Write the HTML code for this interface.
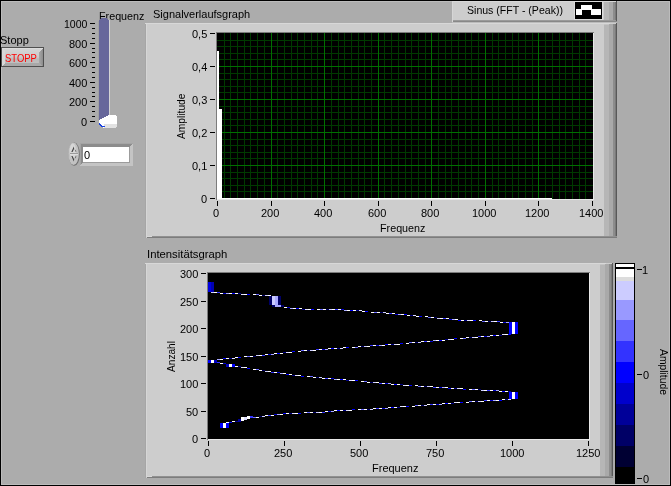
<!DOCTYPE html>
<html><head><meta charset="utf-8"><style>
html,body{margin:0;padding:0;background:#acacac;overflow:hidden;}
svg{display:block;will-change:transform;font-family:"Liberation Sans",sans-serif;font-size:11px;}
</style></head><body>
<svg width="671" height="486" viewBox="0 0 671 486" shape-rendering="crispEdges"><g>
<rect x="0" y="0" width="671" height="486" fill="#acacac"/>
<rect x="0" y="0" width="671" height="1" fill="#000"/>
<rect x="0" y="0" width="1" height="486" fill="#000"/>
<rect x="670" y="0" width="1" height="486" fill="#000"/>
<rect x="0" y="485" width="671" height="1" fill="#000"/>
<rect x="1" y="1" width="669" height="1" fill="#bcbcbc"/>
<rect x="1" y="1" width="1" height="484" fill="#bcbcbc"/>
<rect x="669" y="1" width="1" height="484" fill="#bcbcbc"/>
<rect x="1" y="484" width="669" height="1" fill="#bcbcbc"/>
<text x="0" y="44">Stopp</text>
<rect x="1" y="47" width="43" height="20" fill="#505050"/>
<rect x="2" y="48" width="41" height="18" fill="#c8c8c8"/>
<defs><linearGradient id="btnface" x1="0" y1="0" x2="0" y2="1"><stop offset="0" stop-color="#d6d6d6"/><stop offset="0.5" stop-color="#cbcbcb"/><stop offset="0.62" stop-color="#b9b9b9"/><stop offset="1" stop-color="#c4c4c4"/></linearGradient><linearGradient id="btnr" x1="0" y1="0" x2="1" y2="0"><stop offset="0" stop-color="#a8a8a8"/><stop offset="1" stop-color="#8c8c8c"/></linearGradient></defs>
<path d="M2 48 H43 V66 H2 Z" fill="url(#btnface)"/>
<path d="M43 48 L39 52 L39 63 L43 66 Z" fill="url(#btnr)"/>
<path d="M2 66 L5 63 L39 63 L43 66 Z" fill="#a8a8a8"/>
<path d="M2 48 L5 51 L5 63 L2 66 Z" fill="#d8d8d8"/>
<rect x="2" y="48" width="41" height="1" fill="#dcdcdc"/>
<text x="5" y="62" textLength="31.94" lengthAdjust="spacingAndGlyphs" fill="#ff0000">STOPP</text>
<text x="99" y="20" textLength="45.45" lengthAdjust="spacingAndGlyphs">Frequenz</text>
<text x="64" y="28" textLength="23.42" lengthAdjust="spacingAndGlyphs">1000</text>
<rect x="90" y="23" width="5" height="1" fill="#000"/>
<text x="69" y="48">800</text>
<rect x="90" y="43" width="5" height="1" fill="#000"/>
<text x="69" y="67">600</text>
<rect x="90" y="62" width="5" height="1" fill="#000"/>
<text x="69" y="87">400</text>
<rect x="90" y="82" width="5" height="1" fill="#000"/>
<text x="69" y="106">200</text>
<rect x="90" y="101" width="5" height="1" fill="#000"/>
<text x="81" y="126">0</text>
<rect x="90" y="121" width="5" height="1" fill="#000"/>
<rect x="92" y="28" width="3" height="1" fill="#000"/>
<rect x="92" y="33" width="3" height="1" fill="#000"/>
<rect x="92" y="38" width="3" height="1" fill="#000"/>
<rect x="92" y="48" width="3" height="1" fill="#000"/>
<rect x="92" y="52" width="3" height="1" fill="#000"/>
<rect x="92" y="57" width="3" height="1" fill="#000"/>
<rect x="92" y="67" width="3" height="1" fill="#000"/>
<rect x="92" y="72" width="3" height="1" fill="#000"/>
<rect x="92" y="77" width="3" height="1" fill="#000"/>
<rect x="92" y="87" width="3" height="1" fill="#000"/>
<rect x="92" y="92" width="3" height="1" fill="#000"/>
<rect x="92" y="96" width="3" height="1" fill="#000"/>
<rect x="92" y="106" width="3" height="1" fill="#000"/>
<rect x="92" y="111" width="3" height="1" fill="#000"/>
<rect x="92" y="116" width="3" height="1" fill="#000"/>
<path d="M99 20 L100 19 L101 18 L106 18 L107 19 L108 20 L109 21 L109 125 L99 125 Z" fill="#67679b"/>
<rect x="109" y="20" width="1" height="95" fill="#d4d4d4"/>
<rect x="98" y="21" width="1" height="100" fill="#a2a2a2"/>
<path d="M99 120 L101 119 L103 118 L105 117 L107 116 L109 115 L115 115 L116 116 L117 117 L117 126 L116 127 L115 128 L104 128 L102 127 L100 126 L99 124 Z" fill="#ffffff"/>
<path d="M104 124 L117 124 L117 126 L116 127 L115 128 L104 128 Z" fill="#e2e2e2"/>
<path d="M99 123 h1 v1 h1 v1 h1 v1 h3 v1 h-4 v-1 h-1 v-1 h-1 v-1 h-0 Z" fill="#1840e0"/>
<g shape-rendering="geometricPrecision">
<ellipse cx="74.2" cy="154.2" rx="5.6" ry="11.6" fill="#6e6e6e"/>
<ellipse cx="73.6" cy="153.8" rx="5.3" ry="11.3" fill="#c2c2c2"/>
<ellipse cx="72.8" cy="151" rx="3.2" ry="7.5" fill="#d6d6d6"/>
<path d="M73.8 146.5 L71.3 152 L72.6 152 L74.2 148.5 Z M74.6 149 L75.8 152 L76.4 151.2 Z" fill="#444"/>
<path d="M73.8 161.5 L71.3 156 L72.6 156 L74.2 159.5 Z M74.6 159 L75.8 156 L76.4 156.8 Z" fill="#444"/>
</g>
<rect x="70" y="153" width="8" height="1" fill="#9a9a9a"/>
<rect x="70" y="154" width="8" height="1" fill="#dedede"/>
<rect x="80" y="143" width="53" height="23" fill="#c8c8c8"/>
<path d="M80 143 H133 L129 147 H83 V162 L80 166 Z" fill="#8c8c8c"/>
<path d="M80 143 H133 L132 144 H81 V165 L80 166 Z" fill="#a4a4a4"/>
<path d="M133 143 V166 H80 L83 162 H129 V147 Z" fill="#c4c4c4"/>
<path d="M129 147 V162 H83 L82 163 H130 V146 Z" fill="#9c9c9c"/>
<rect x="83" y="147" width="46" height="15" fill="#ffffff"/>
<text x="84" y="159">0</text>
<text x="153" y="18">Signalverlaufsgraph</text>
<rect x="145" y="23" width="472" height="215" fill="#cdcdcd"/>
<rect x="145" y="23" width="1" height="215" fill="#a6a6a6"/>
<rect x="146" y="23" width="1" height="214" fill="#d6d6d6"/>
<rect x="145" y="23" width="465" height="1" fill="#d8d8d8"/>
<rect x="604" y="25" width="5" height="213" fill="#b6b6b6"/>
<rect x="609" y="24" width="4" height="214" fill="#a9a9a9"/>
<rect x="613" y="24" width="2" height="214" fill="#8c8c8c"/>
<rect x="615" y="24" width="1" height="214" fill="#7a7a7a"/>
<rect x="616" y="23" width="1" height="215" fill="#585858"/>
<rect x="604" y="24" width="5" height="1" fill="#c4c4c4"/>
<rect x="152" y="236" width="465" height="1" fill="#909090"/>
<rect x="147" y="236" width="5" height="1" fill="#d8d8d8"/>
<rect x="147" y="237" width="470" height="1" fill="#7c7c7c"/>
<rect x="452" y="1" width="165" height="21" fill="#cdcdcd"/>
<rect x="452" y="1" width="165" height="1" fill="#d8d8d8"/>
<rect x="452" y="1" width="1" height="21" fill="#d6d6d6"/>
<rect x="604" y="2" width="5" height="18" fill="#b6b6b6"/>
<rect x="609" y="2" width="4" height="18" fill="#a9a9a9"/>
<rect x="613" y="2" width="2" height="18" fill="#8c8c8c"/>
<rect x="615" y="2" width="1" height="18" fill="#7a7a7a"/>
<rect x="616" y="1" width="1" height="21" fill="#585858"/>
<rect x="453" y="20" width="163" height="1" fill="#9a9a9a"/>
<rect x="453" y="21" width="164" height="1" fill="#888888"/>
<rect x="452" y="22" width="165" height="1" fill="#bcbcbc"/>
<text x="467" y="14" textLength="95.95" lengthAdjust="spacingAndGlyphs">Sinus (FFT - (Peak))</text>
<rect x="574" y="1" width="29" height="19" fill="#dcdcdc"/>
<rect x="575" y="2" width="27" height="17" fill="#000"/>
<rect x="576" y="9" width="6" height="6" fill="#fff"/>
<rect x="581" y="5" width="11" height="5" fill="#fff"/>
<rect x="591" y="9" width="10" height="6" fill="#fff"/>
<rect x="582" y="10" width="9" height="5" fill="#000"/>
<rect x="216" y="32" width="378" height="168" fill="#7c7c7c"/>
<rect x="593" y="33" width="1" height="167" fill="#e8e8e8"/>
<rect x="217" y="199" width="377" height="1" fill="#e8e8e8"/>
<rect x="217" y="33" width="376" height="166" fill="#000"/>
<rect x="217" y="40" width="376" height="1" fill="#003a00"/>
<rect x="217" y="46" width="376" height="1" fill="#003a00"/>
<rect x="217" y="53" width="376" height="1" fill="#003a00"/>
<rect x="217" y="59" width="376" height="1" fill="#003a00"/>
<rect x="217" y="66" width="376" height="1" fill="#003a00"/>
<rect x="217" y="73" width="376" height="1" fill="#003a00"/>
<rect x="217" y="79" width="376" height="1" fill="#003a00"/>
<rect x="217" y="86" width="376" height="1" fill="#003a00"/>
<rect x="217" y="92" width="376" height="1" fill="#003a00"/>
<rect x="217" y="99" width="376" height="1" fill="#003a00"/>
<rect x="217" y="106" width="376" height="1" fill="#003a00"/>
<rect x="217" y="112" width="376" height="1" fill="#003a00"/>
<rect x="217" y="119" width="376" height="1" fill="#003a00"/>
<rect x="217" y="125" width="376" height="1" fill="#003a00"/>
<rect x="217" y="132" width="376" height="1" fill="#003a00"/>
<rect x="217" y="139" width="376" height="1" fill="#003a00"/>
<rect x="217" y="145" width="376" height="1" fill="#003a00"/>
<rect x="217" y="152" width="376" height="1" fill="#003a00"/>
<rect x="217" y="158" width="376" height="1" fill="#003a00"/>
<rect x="217" y="165" width="376" height="1" fill="#003a00"/>
<rect x="217" y="172" width="376" height="1" fill="#003a00"/>
<rect x="217" y="178" width="376" height="1" fill="#003a00"/>
<rect x="217" y="185" width="376" height="1" fill="#003a00"/>
<rect x="217" y="191" width="376" height="1" fill="#003a00"/>
<rect x="224" y="33" width="1" height="166" fill="#003a00"/>
<rect x="230" y="33" width="1" height="166" fill="#003a00"/>
<rect x="237" y="33" width="1" height="166" fill="#003a00"/>
<rect x="244" y="33" width="1" height="166" fill="#003a00"/>
<rect x="250" y="33" width="1" height="166" fill="#003a00"/>
<rect x="257" y="33" width="1" height="166" fill="#003a00"/>
<rect x="264" y="33" width="1" height="166" fill="#003a00"/>
<rect x="271" y="33" width="1" height="166" fill="#003a00"/>
<rect x="277" y="33" width="1" height="166" fill="#003a00"/>
<rect x="284" y="33" width="1" height="166" fill="#003a00"/>
<rect x="291" y="33" width="1" height="166" fill="#003a00"/>
<rect x="297" y="33" width="1" height="166" fill="#003a00"/>
<rect x="304" y="33" width="1" height="166" fill="#003a00"/>
<rect x="311" y="33" width="1" height="166" fill="#003a00"/>
<rect x="317" y="33" width="1" height="166" fill="#003a00"/>
<rect x="324" y="33" width="1" height="166" fill="#003a00"/>
<rect x="331" y="33" width="1" height="166" fill="#003a00"/>
<rect x="338" y="33" width="1" height="166" fill="#003a00"/>
<rect x="344" y="33" width="1" height="166" fill="#003a00"/>
<rect x="351" y="33" width="1" height="166" fill="#003a00"/>
<rect x="358" y="33" width="1" height="166" fill="#003a00"/>
<rect x="364" y="33" width="1" height="166" fill="#003a00"/>
<rect x="371" y="33" width="1" height="166" fill="#003a00"/>
<rect x="378" y="33" width="1" height="166" fill="#003a00"/>
<rect x="384" y="33" width="1" height="166" fill="#003a00"/>
<rect x="391" y="33" width="1" height="166" fill="#003a00"/>
<rect x="398" y="33" width="1" height="166" fill="#003a00"/>
<rect x="405" y="33" width="1" height="166" fill="#003a00"/>
<rect x="411" y="33" width="1" height="166" fill="#003a00"/>
<rect x="418" y="33" width="1" height="166" fill="#003a00"/>
<rect x="425" y="33" width="1" height="166" fill="#003a00"/>
<rect x="431" y="33" width="1" height="166" fill="#003a00"/>
<rect x="438" y="33" width="1" height="166" fill="#003a00"/>
<rect x="445" y="33" width="1" height="166" fill="#003a00"/>
<rect x="451" y="33" width="1" height="166" fill="#003a00"/>
<rect x="458" y="33" width="1" height="166" fill="#003a00"/>
<rect x="465" y="33" width="1" height="166" fill="#003a00"/>
<rect x="471" y="33" width="1" height="166" fill="#003a00"/>
<rect x="478" y="33" width="1" height="166" fill="#003a00"/>
<rect x="485" y="33" width="1" height="166" fill="#003a00"/>
<rect x="492" y="33" width="1" height="166" fill="#003a00"/>
<rect x="498" y="33" width="1" height="166" fill="#003a00"/>
<rect x="505" y="33" width="1" height="166" fill="#003a00"/>
<rect x="512" y="33" width="1" height="166" fill="#003a00"/>
<rect x="518" y="33" width="1" height="166" fill="#003a00"/>
<rect x="525" y="33" width="1" height="166" fill="#003a00"/>
<rect x="532" y="33" width="1" height="166" fill="#003a00"/>
<rect x="538" y="33" width="1" height="166" fill="#003a00"/>
<rect x="545" y="33" width="1" height="166" fill="#003a00"/>
<rect x="552" y="33" width="1" height="166" fill="#003a00"/>
<rect x="559" y="33" width="1" height="166" fill="#003a00"/>
<rect x="565" y="33" width="1" height="166" fill="#003a00"/>
<rect x="572" y="33" width="1" height="166" fill="#003a00"/>
<rect x="579" y="33" width="1" height="166" fill="#003a00"/>
<rect x="585" y="33" width="1" height="166" fill="#003a00"/>
<rect x="217" y="66" width="376" height="1" fill="#007000"/>
<rect x="217" y="99" width="376" height="1" fill="#007000"/>
<rect x="217" y="132" width="376" height="1" fill="#007000"/>
<rect x="217" y="165" width="376" height="1" fill="#007000"/>
<rect x="271" y="33" width="1" height="166" fill="#007000"/>
<rect x="324" y="33" width="1" height="166" fill="#007000"/>
<rect x="378" y="33" width="1" height="166" fill="#007000"/>
<rect x="431" y="33" width="1" height="166" fill="#007000"/>
<rect x="485" y="33" width="1" height="166" fill="#007000"/>
<rect x="538" y="33" width="1" height="166" fill="#007000"/>
<rect x="217" y="51" width="2" height="148" fill="#fff"/>
<rect x="217" y="109" width="5" height="90" fill="#fff"/>
<rect x="217" y="198" width="335" height="1" fill="#fff"/>
<rect x="210" y="33" width="5" height="1" fill="#000"/>
<text x="192" y="38">0,5</text>
<rect x="210" y="66" width="5" height="1" fill="#000"/>
<text x="192" y="71">0,4</text>
<rect x="210" y="99" width="5" height="1" fill="#000"/>
<text x="192" y="104">0,3</text>
<rect x="210" y="132" width="5" height="1" fill="#000"/>
<text x="192" y="137">0,2</text>
<rect x="210" y="165" width="5" height="1" fill="#000"/>
<text x="192" y="170">0,1</text>
<rect x="210" y="198" width="5" height="1" fill="#000"/>
<text x="201" y="203">0</text>
<rect x="217" y="201" width="1" height="5" fill="#000"/>
<text x="213" y="217">0</text>
<rect x="271" y="201" width="1" height="5" fill="#000"/>
<text x="261" y="217">200</text>
<rect x="324" y="201" width="1" height="5" fill="#000"/>
<text x="314" y="217">400</text>
<rect x="378" y="201" width="1" height="5" fill="#000"/>
<text x="368" y="217">600</text>
<rect x="431" y="201" width="1" height="5" fill="#000"/>
<text x="421" y="217">800</text>
<rect x="485" y="201" width="1" height="5" fill="#000"/>
<text x="472" y="217">1000</text>
<rect x="538" y="201" width="1" height="5" fill="#000"/>
<text x="525" y="217">1200</text>
<rect x="592" y="201" width="1" height="5" fill="#000"/>
<text x="579" y="217">1400</text>
<text x="380" y="232" textLength="45.45" lengthAdjust="spacingAndGlyphs">Frequenz</text>
<text transform="translate(185,139) rotate(-90)" textLength="45.5" lengthAdjust="spacingAndGlyphs">Amplitude</text>
<text x="147" y="258" textLength="80.31" lengthAdjust="spacingAndGlyphs">Intensitätsgraph</text>
<rect x="145" y="263" width="468" height="215" fill="#cdcdcd"/>
<rect x="145" y="263" width="1" height="215" fill="#a6a6a6"/>
<rect x="146" y="263" width="1" height="214" fill="#d6d6d6"/>
<rect x="145" y="263" width="461" height="1" fill="#d8d8d8"/>
<rect x="600" y="265" width="5" height="213" fill="#b6b6b6"/>
<rect x="605" y="264" width="4" height="214" fill="#a9a9a9"/>
<rect x="609" y="264" width="2" height="214" fill="#8c8c8c"/>
<rect x="611" y="264" width="1" height="214" fill="#7a7a7a"/>
<rect x="612" y="263" width="1" height="215" fill="#585858"/>
<rect x="600" y="264" width="5" height="1" fill="#c4c4c4"/>
<rect x="152" y="476" width="461" height="1" fill="#909090"/>
<rect x="147" y="476" width="5" height="1" fill="#d8d8d8"/>
<rect x="147" y="477" width="466" height="1" fill="#7c7c7c"/>
<rect x="207" y="272" width="383" height="168" fill="#7c7c7c"/>
<rect x="589" y="273" width="1" height="167" fill="#e8e8e8"/>
<rect x="208" y="439" width="382" height="1" fill="#e8e8e8"/>
<rect x="208" y="273" width="381" height="166" fill="#000"/>
<rect x="201" y="273" width="5" height="1" fill="#000"/>
<text x="180" y="278">300</text>
<rect x="201" y="301" width="5" height="1" fill="#000"/>
<text x="180" y="306">250</text>
<rect x="201" y="328" width="5" height="1" fill="#000"/>
<text x="180" y="333">200</text>
<rect x="201" y="356" width="5" height="1" fill="#000"/>
<text x="180" y="361">150</text>
<rect x="201" y="383" width="5" height="1" fill="#000"/>
<text x="180" y="388">100</text>
<rect x="201" y="411" width="5" height="1" fill="#000"/>
<text x="186" y="416">50</text>
<rect x="201" y="438" width="5" height="1" fill="#000"/>
<text x="192" y="443">0</text>
<rect x="208" y="441" width="1" height="5" fill="#000"/>
<text x="204" y="457">0</text>
<rect x="284" y="441" width="1" height="5" fill="#000"/>
<text x="274" y="457">250</text>
<rect x="360" y="441" width="1" height="5" fill="#000"/>
<text x="350" y="457">500</text>
<rect x="436" y="441" width="1" height="5" fill="#000"/>
<text x="426" y="457">750</text>
<rect x="512" y="441" width="1" height="5" fill="#000"/>
<text x="500" y="457">1000</text>
<rect x="588" y="441" width="1" height="5" fill="#000"/>
<text x="576" y="457">1250</text>
<text x="372" y="472">Frequenz</text>
<text transform="translate(175,372) rotate(-90)" textLength="31" lengthAdjust="spacingAndGlyphs">Anzahl</text>
<rect x="615" y="263" width="20" height="221" fill="#000"/>
<rect x="616" y="264" width="18" height="3" fill="#ffffff"/>
<rect x="616" y="269" width="18" height="8" fill="#ffffff"/>
<rect x="616" y="277" width="18" height="4" fill="#dcdcdc"/>
<rect x="616" y="281" width="18" height="19" fill="#ccccff"/>
<rect x="616" y="300" width="18" height="20" fill="#9999ff"/>
<rect x="616" y="320" width="18" height="21" fill="#6666ff"/>
<rect x="616" y="341" width="18" height="21" fill="#3333ff"/>
<rect x="616" y="362" width="18" height="21" fill="#0000ff"/>
<rect x="616" y="383" width="18" height="21" fill="#0000cc"/>
<rect x="616" y="404" width="18" height="21" fill="#000099"/>
<rect x="616" y="425" width="18" height="21" fill="#000066"/>
<rect x="616" y="446" width="18" height="21" fill="#000033"/>
<rect x="637" y="269" width="5" height="1" fill="#000"/>
<text x="642" y="274">1</text>
<rect x="637" y="374" width="5" height="1" fill="#000"/>
<text x="643" y="379">0</text>
<rect x="637" y="478" width="5" height="1" fill="#000"/>
<text x="643" y="483">0</text>
<text transform="translate(660,349) rotate(90)" textLength="46" lengthAdjust="spacingAndGlyphs">Amplitude</text>
<g shape-rendering="crispEdges">
<rect x="211" y="292" width="3" height="1" fill="#ccccff"/>
<rect x="214" y="292" width="3" height="1" fill="#ffffff"/>
<rect x="217" y="292" width="3" height="1" fill="#3333ff"/>
<rect x="220" y="293" width="3" height="1" fill="#ffffff"/>
<rect x="223" y="293" width="3" height="1" fill="#0000cc"/>
<rect x="226" y="293" width="3" height="1" fill="#aaaaff"/>
<rect x="229" y="293" width="3" height="1" fill="#ffffff"/>
<rect x="232" y="293" width="3" height="1" fill="#0000ff"/>
<rect x="235" y="293" width="3" height="1" fill="#ffffff"/>
<rect x="238" y="293" width="3" height="1" fill="#000088"/>
<rect x="241" y="294" width="3" height="1" fill="#ddddff"/>
<rect x="244" y="294" width="3" height="1" fill="#ffffff"/>
<rect x="247" y="294" width="3" height="1" fill="#0000ff"/>
<rect x="253" y="294" width="3" height="1" fill="#ffffff"/>
<rect x="256" y="294" width="3" height="1" fill="#6666ff"/>
<rect x="259" y="295" width="3" height="1" fill="#ffffff"/>
<rect x="262" y="295" width="3" height="1" fill="#000066"/>
<rect x="265" y="295" width="3" height="1" fill="#ccccff"/>
<rect x="268" y="295" width="3" height="1" fill="#ffffff"/>
<rect x="284" y="307" width="3" height="1" fill="#ffffff"/>
<rect x="287" y="307" width="3" height="1" fill="#0000cc"/>
<rect x="290" y="308" width="3" height="1" fill="#aaaaff"/>
<rect x="293" y="308" width="3" height="1" fill="#ffffff"/>
<rect x="296" y="308" width="3" height="1" fill="#0000ff"/>
<rect x="299" y="308" width="3" height="1" fill="#ffffff"/>
<rect x="302" y="309" width="3" height="1" fill="#000088"/>
<rect x="305" y="309" width="3" height="1" fill="#ddddff"/>
<rect x="308" y="309" width="3" height="1" fill="#ffffff"/>
<rect x="311" y="309" width="3" height="1" fill="#0000ff"/>
<rect x="317" y="309" width="3" height="1" fill="#ffffff"/>
<rect x="320" y="309" width="3" height="1" fill="#6666ff"/>
<rect x="323" y="309" width="3" height="1" fill="#ffffff"/>
<rect x="326" y="309" width="3" height="1" fill="#000066"/>
<rect x="329" y="309" width="3" height="1" fill="#ccccff"/>
<rect x="332" y="309" width="3" height="1" fill="#ffffff"/>
<rect x="335" y="309" width="3" height="1" fill="#3333ff"/>
<rect x="338" y="309" width="3" height="1" fill="#ffffff"/>
<rect x="341" y="309" width="3" height="1" fill="#0000cc"/>
<rect x="344" y="310" width="3" height="1" fill="#aaaaff"/>
<rect x="347" y="310" width="3" height="1" fill="#ffffff"/>
<rect x="350" y="310" width="3" height="1" fill="#0000ff"/>
<rect x="353" y="310" width="3" height="1" fill="#ffffff"/>
<rect x="356" y="310" width="3" height="1" fill="#000088"/>
<rect x="359" y="310" width="3" height="1" fill="#ddddff"/>
<rect x="362" y="311" width="3" height="1" fill="#ffffff"/>
<rect x="365" y="311" width="3" height="1" fill="#0000ff"/>
<rect x="371" y="312" width="3" height="1" fill="#ffffff"/>
<rect x="374" y="312" width="3" height="1" fill="#6666ff"/>
<rect x="377" y="312" width="3" height="1" fill="#ffffff"/>
<rect x="380" y="312" width="3" height="1" fill="#000066"/>
<rect x="383" y="312" width="3" height="1" fill="#ccccff"/>
<rect x="386" y="313" width="3" height="1" fill="#ffffff"/>
<rect x="389" y="313" width="3" height="1" fill="#3333ff"/>
<rect x="392" y="313" width="3" height="1" fill="#ffffff"/>
<rect x="395" y="314" width="3" height="1" fill="#0000cc"/>
<rect x="398" y="314" width="3" height="1" fill="#aaaaff"/>
<rect x="401" y="314" width="3" height="1" fill="#ffffff"/>
<rect x="404" y="314" width="3" height="1" fill="#0000ff"/>
<rect x="407" y="315" width="3" height="1" fill="#ffffff"/>
<rect x="410" y="315" width="3" height="1" fill="#000088"/>
<rect x="413" y="315" width="3" height="1" fill="#ddddff"/>
<rect x="416" y="316" width="3" height="1" fill="#ffffff"/>
<rect x="419" y="316" width="3" height="1" fill="#0000ff"/>
<rect x="425" y="316" width="3" height="1" fill="#ffffff"/>
<rect x="428" y="317" width="3" height="1" fill="#6666ff"/>
<rect x="431" y="317" width="3" height="1" fill="#ffffff"/>
<rect x="434" y="317" width="3" height="1" fill="#000066"/>
<rect x="437" y="318" width="3" height="1" fill="#ccccff"/>
<rect x="440" y="318" width="3" height="1" fill="#ffffff"/>
<rect x="443" y="318" width="3" height="1" fill="#3333ff"/>
<rect x="446" y="318" width="3" height="1" fill="#ffffff"/>
<rect x="449" y="319" width="3" height="1" fill="#0000cc"/>
<rect x="452" y="319" width="3" height="1" fill="#aaaaff"/>
<rect x="455" y="319" width="3" height="1" fill="#ffffff"/>
<rect x="458" y="320" width="3" height="1" fill="#0000ff"/>
<rect x="461" y="320" width="3" height="1" fill="#ffffff"/>
<rect x="464" y="320" width="3" height="1" fill="#000088"/>
<rect x="467" y="320" width="3" height="1" fill="#ddddff"/>
<rect x="470" y="320" width="3" height="1" fill="#ffffff"/>
<rect x="473" y="320" width="3" height="1" fill="#0000ff"/>
<rect x="479" y="320" width="3" height="1" fill="#ffffff"/>
<rect x="482" y="321" width="3" height="1" fill="#6666ff"/>
<rect x="485" y="321" width="3" height="1" fill="#ffffff"/>
<rect x="488" y="321" width="3" height="1" fill="#000066"/>
<rect x="491" y="321" width="3" height="1" fill="#ccccff"/>
<rect x="494" y="321" width="3" height="1" fill="#ffffff"/>
<rect x="497" y="321" width="3" height="1" fill="#3333ff"/>
<rect x="500" y="322" width="3" height="1" fill="#ffffff"/>
<rect x="503" y="322" width="3" height="1" fill="#0000cc"/>
<rect x="506" y="322" width="3" height="1" fill="#aaaaff"/>
<rect x="217" y="359" width="3" height="1" fill="#aaaaff"/>
<rect x="220" y="359" width="3" height="1" fill="#ffffff"/>
<rect x="223" y="358" width="3" height="1" fill="#0000ff"/>
<rect x="226" y="358" width="3" height="1" fill="#ffffff"/>
<rect x="229" y="358" width="3" height="1" fill="#000088"/>
<rect x="232" y="358" width="3" height="1" fill="#ddddff"/>
<rect x="235" y="357" width="3" height="1" fill="#ffffff"/>
<rect x="238" y="357" width="3" height="1" fill="#0000ff"/>
<rect x="244" y="356" width="3" height="1" fill="#ffffff"/>
<rect x="247" y="356" width="3" height="1" fill="#6666ff"/>
<rect x="250" y="356" width="3" height="1" fill="#ffffff"/>
<rect x="253" y="356" width="3" height="1" fill="#000066"/>
<rect x="256" y="355" width="3" height="1" fill="#ccccff"/>
<rect x="259" y="355" width="3" height="1" fill="#ffffff"/>
<rect x="262" y="355" width="3" height="1" fill="#3333ff"/>
<rect x="265" y="354" width="3" height="1" fill="#ffffff"/>
<rect x="268" y="354" width="3" height="1" fill="#0000cc"/>
<rect x="271" y="354" width="3" height="1" fill="#aaaaff"/>
<rect x="274" y="353" width="3" height="1" fill="#ffffff"/>
<rect x="277" y="353" width="3" height="1" fill="#0000ff"/>
<rect x="280" y="353" width="3" height="1" fill="#ffffff"/>
<rect x="283" y="352" width="3" height="1" fill="#000088"/>
<rect x="286" y="352" width="3" height="1" fill="#ddddff"/>
<rect x="289" y="352" width="3" height="1" fill="#ffffff"/>
<rect x="292" y="351" width="3" height="1" fill="#0000ff"/>
<rect x="298" y="351" width="3" height="1" fill="#ffffff"/>
<rect x="301" y="350" width="3" height="1" fill="#6666ff"/>
<rect x="304" y="350" width="3" height="1" fill="#ffffff"/>
<rect x="307" y="350" width="3" height="1" fill="#000066"/>
<rect x="310" y="350" width="3" height="1" fill="#ccccff"/>
<rect x="313" y="350" width="3" height="1" fill="#ffffff"/>
<rect x="316" y="349" width="3" height="1" fill="#3333ff"/>
<rect x="319" y="349" width="3" height="1" fill="#ffffff"/>
<rect x="322" y="349" width="3" height="1" fill="#0000cc"/>
<rect x="325" y="349" width="3" height="1" fill="#aaaaff"/>
<rect x="328" y="348" width="3" height="1" fill="#ffffff"/>
<rect x="331" y="348" width="3" height="1" fill="#0000ff"/>
<rect x="334" y="348" width="3" height="1" fill="#ffffff"/>
<rect x="337" y="348" width="3" height="1" fill="#000088"/>
<rect x="340" y="348" width="3" height="1" fill="#ddddff"/>
<rect x="343" y="347" width="3" height="1" fill="#ffffff"/>
<rect x="346" y="347" width="3" height="1" fill="#0000ff"/>
<rect x="352" y="347" width="3" height="1" fill="#ffffff"/>
<rect x="355" y="347" width="3" height="1" fill="#6666ff"/>
<rect x="358" y="346" width="3" height="1" fill="#ffffff"/>
<rect x="361" y="346" width="3" height="1" fill="#000066"/>
<rect x="364" y="346" width="3" height="1" fill="#ccccff"/>
<rect x="367" y="346" width="3" height="1" fill="#ffffff"/>
<rect x="370" y="345" width="3" height="1" fill="#3333ff"/>
<rect x="373" y="345" width="3" height="1" fill="#ffffff"/>
<rect x="376" y="345" width="3" height="1" fill="#0000cc"/>
<rect x="379" y="345" width="3" height="1" fill="#aaaaff"/>
<rect x="382" y="345" width="3" height="1" fill="#ffffff"/>
<rect x="385" y="344" width="3" height="1" fill="#0000ff"/>
<rect x="388" y="344" width="3" height="1" fill="#ffffff"/>
<rect x="391" y="344" width="3" height="1" fill="#000088"/>
<rect x="394" y="344" width="3" height="1" fill="#ddddff"/>
<rect x="397" y="344" width="3" height="1" fill="#ffffff"/>
<rect x="400" y="343" width="3" height="1" fill="#0000ff"/>
<rect x="406" y="343" width="3" height="1" fill="#ffffff"/>
<rect x="409" y="342" width="3" height="1" fill="#6666ff"/>
<rect x="412" y="342" width="3" height="1" fill="#ffffff"/>
<rect x="415" y="342" width="3" height="1" fill="#000066"/>
<rect x="418" y="342" width="3" height="1" fill="#ccccff"/>
<rect x="421" y="341" width="3" height="1" fill="#ffffff"/>
<rect x="424" y="341" width="3" height="1" fill="#3333ff"/>
<rect x="427" y="341" width="3" height="1" fill="#ffffff"/>
<rect x="430" y="341" width="3" height="1" fill="#0000cc"/>
<rect x="433" y="340" width="3" height="1" fill="#aaaaff"/>
<rect x="436" y="340" width="3" height="1" fill="#ffffff"/>
<rect x="439" y="340" width="3" height="1" fill="#0000ff"/>
<rect x="442" y="340" width="3" height="1" fill="#ffffff"/>
<rect x="445" y="339" width="3" height="1" fill="#000088"/>
<rect x="448" y="339" width="3" height="1" fill="#ddddff"/>
<rect x="451" y="339" width="3" height="1" fill="#ffffff"/>
<rect x="454" y="338" width="3" height="1" fill="#0000ff"/>
<rect x="460" y="338" width="3" height="1" fill="#ffffff"/>
<rect x="463" y="338" width="3" height="1" fill="#6666ff"/>
<rect x="466" y="337" width="3" height="1" fill="#ffffff"/>
<rect x="469" y="337" width="3" height="1" fill="#000066"/>
<rect x="472" y="337" width="3" height="1" fill="#ccccff"/>
<rect x="475" y="337" width="3" height="1" fill="#ffffff"/>
<rect x="478" y="336" width="3" height="1" fill="#3333ff"/>
<rect x="481" y="336" width="3" height="1" fill="#ffffff"/>
<rect x="484" y="336" width="3" height="1" fill="#0000cc"/>
<rect x="487" y="336" width="3" height="1" fill="#aaaaff"/>
<rect x="490" y="335" width="3" height="1" fill="#ffffff"/>
<rect x="493" y="335" width="3" height="1" fill="#0000ff"/>
<rect x="496" y="335" width="3" height="1" fill="#ffffff"/>
<rect x="499" y="335" width="3" height="1" fill="#000088"/>
<rect x="502" y="334" width="3" height="1" fill="#ddddff"/>
<rect x="505" y="334" width="3" height="1" fill="#ffffff"/>
<rect x="508" y="334" width="3" height="1" fill="#0000ff"/>
<rect x="217" y="362" width="3" height="1" fill="#3333ff"/>
<rect x="220" y="363" width="3" height="1" fill="#ffffff"/>
<rect x="223" y="363" width="3" height="1" fill="#0000cc"/>
<rect x="226" y="364" width="3" height="1" fill="#aaaaff"/>
<rect x="229" y="364" width="3" height="1" fill="#ffffff"/>
<rect x="232" y="365" width="3" height="1" fill="#0000ff"/>
<rect x="235" y="366" width="3" height="1" fill="#ffffff"/>
<rect x="238" y="366" width="3" height="1" fill="#000088"/>
<rect x="241" y="367" width="3" height="1" fill="#ddddff"/>
<rect x="244" y="367" width="3" height="1" fill="#ffffff"/>
<rect x="247" y="368" width="3" height="1" fill="#0000ff"/>
<rect x="253" y="369" width="3" height="1" fill="#ffffff"/>
<rect x="256" y="369" width="3" height="1" fill="#6666ff"/>
<rect x="259" y="370" width="3" height="1" fill="#ffffff"/>
<rect x="262" y="370" width="3" height="1" fill="#000066"/>
<rect x="265" y="371" width="3" height="1" fill="#ccccff"/>
<rect x="268" y="371" width="3" height="1" fill="#ffffff"/>
<rect x="271" y="372" width="3" height="1" fill="#3333ff"/>
<rect x="274" y="372" width="3" height="1" fill="#ffffff"/>
<rect x="277" y="372" width="3" height="1" fill="#0000cc"/>
<rect x="280" y="373" width="3" height="1" fill="#aaaaff"/>
<rect x="283" y="373" width="3" height="1" fill="#ffffff"/>
<rect x="286" y="374" width="3" height="1" fill="#0000ff"/>
<rect x="289" y="374" width="3" height="1" fill="#ffffff"/>
<rect x="292" y="375" width="3" height="1" fill="#000088"/>
<rect x="295" y="375" width="3" height="1" fill="#ddddff"/>
<rect x="298" y="375" width="3" height="1" fill="#ffffff"/>
<rect x="301" y="376" width="3" height="1" fill="#0000ff"/>
<rect x="307" y="376" width="3" height="1" fill="#ffffff"/>
<rect x="310" y="376" width="3" height="1" fill="#6666ff"/>
<rect x="313" y="377" width="3" height="1" fill="#ffffff"/>
<rect x="316" y="377" width="3" height="1" fill="#000066"/>
<rect x="319" y="377" width="3" height="1" fill="#ccccff"/>
<rect x="322" y="378" width="3" height="1" fill="#ffffff"/>
<rect x="325" y="378" width="3" height="1" fill="#3333ff"/>
<rect x="328" y="378" width="3" height="1" fill="#ffffff"/>
<rect x="331" y="378" width="3" height="1" fill="#0000cc"/>
<rect x="334" y="379" width="3" height="1" fill="#aaaaff"/>
<rect x="337" y="379" width="3" height="1" fill="#ffffff"/>
<rect x="340" y="379" width="3" height="1" fill="#0000ff"/>
<rect x="343" y="379" width="3" height="1" fill="#ffffff"/>
<rect x="346" y="380" width="3" height="1" fill="#000088"/>
<rect x="349" y="380" width="3" height="1" fill="#ddddff"/>
<rect x="352" y="380" width="3" height="1" fill="#ffffff"/>
<rect x="355" y="380" width="3" height="1" fill="#0000ff"/>
<rect x="361" y="381" width="3" height="1" fill="#ffffff"/>
<rect x="364" y="381" width="3" height="1" fill="#6666ff"/>
<rect x="367" y="382" width="3" height="1" fill="#ffffff"/>
<rect x="370" y="382" width="3" height="1" fill="#000066"/>
<rect x="373" y="382" width="3" height="1" fill="#ccccff"/>
<rect x="376" y="382" width="3" height="1" fill="#ffffff"/>
<rect x="379" y="383" width="3" height="1" fill="#3333ff"/>
<rect x="382" y="383" width="3" height="1" fill="#ffffff"/>
<rect x="385" y="383" width="3" height="1" fill="#0000cc"/>
<rect x="388" y="383" width="3" height="1" fill="#aaaaff"/>
<rect x="391" y="384" width="3" height="1" fill="#ffffff"/>
<rect x="394" y="384" width="3" height="1" fill="#0000ff"/>
<rect x="397" y="384" width="3" height="1" fill="#ffffff"/>
<rect x="400" y="384" width="3" height="1" fill="#000088"/>
<rect x="403" y="385" width="3" height="1" fill="#ddddff"/>
<rect x="406" y="385" width="3" height="1" fill="#ffffff"/>
<rect x="409" y="385" width="3" height="1" fill="#0000ff"/>
<rect x="415" y="385" width="3" height="1" fill="#ffffff"/>
<rect x="418" y="386" width="3" height="1" fill="#6666ff"/>
<rect x="421" y="386" width="3" height="1" fill="#ffffff"/>
<rect x="424" y="386" width="3" height="1" fill="#000066"/>
<rect x="427" y="386" width="3" height="1" fill="#ccccff"/>
<rect x="430" y="386" width="3" height="1" fill="#ffffff"/>
<rect x="433" y="387" width="3" height="1" fill="#3333ff"/>
<rect x="436" y="387" width="3" height="1" fill="#ffffff"/>
<rect x="439" y="387" width="3" height="1" fill="#0000cc"/>
<rect x="442" y="387" width="3" height="1" fill="#aaaaff"/>
<rect x="445" y="387" width="3" height="1" fill="#ffffff"/>
<rect x="448" y="388" width="3" height="1" fill="#0000ff"/>
<rect x="451" y="388" width="3" height="1" fill="#ffffff"/>
<rect x="454" y="388" width="3" height="1" fill="#000088"/>
<rect x="457" y="388" width="3" height="1" fill="#ddddff"/>
<rect x="460" y="388" width="3" height="1" fill="#ffffff"/>
<rect x="463" y="389" width="3" height="1" fill="#0000ff"/>
<rect x="469" y="389" width="3" height="1" fill="#ffffff"/>
<rect x="472" y="389" width="3" height="1" fill="#6666ff"/>
<rect x="475" y="389" width="3" height="1" fill="#ffffff"/>
<rect x="478" y="389" width="3" height="1" fill="#000066"/>
<rect x="481" y="390" width="3" height="1" fill="#ccccff"/>
<rect x="484" y="390" width="3" height="1" fill="#ffffff"/>
<rect x="487" y="390" width="3" height="1" fill="#3333ff"/>
<rect x="490" y="390" width="3" height="1" fill="#ffffff"/>
<rect x="493" y="390" width="3" height="1" fill="#0000cc"/>
<rect x="496" y="390" width="3" height="1" fill="#aaaaff"/>
<rect x="499" y="391" width="3" height="1" fill="#ffffff"/>
<rect x="502" y="391" width="3" height="1" fill="#0000ff"/>
<rect x="505" y="391" width="3" height="1" fill="#ffffff"/>
<rect x="508" y="391" width="3" height="1" fill="#000088"/>
<rect x="229" y="422" width="3" height="1" fill="#0000ff"/>
<rect x="232" y="421" width="3" height="1" fill="#ffffff"/>
<rect x="235" y="421" width="3" height="1" fill="#000088"/>
<rect x="238" y="420" width="3" height="1" fill="#ddddff"/>
<rect x="241" y="419" width="3" height="1" fill="#ffffff"/>
<rect x="244" y="419" width="3" height="1" fill="#0000ff"/>
<rect x="250" y="417" width="3" height="1" fill="#ffffff"/>
<rect x="253" y="417" width="3" height="1" fill="#6666ff"/>
<rect x="256" y="417" width="3" height="1" fill="#ffffff"/>
<rect x="259" y="416" width="3" height="1" fill="#000066"/>
<rect x="262" y="416" width="3" height="1" fill="#ccccff"/>
<rect x="265" y="415" width="3" height="1" fill="#ffffff"/>
<rect x="268" y="415" width="3" height="1" fill="#3333ff"/>
<rect x="271" y="415" width="3" height="1" fill="#ffffff"/>
<rect x="274" y="414" width="3" height="1" fill="#0000cc"/>
<rect x="277" y="414" width="3" height="1" fill="#aaaaff"/>
<rect x="280" y="414" width="3" height="1" fill="#ffffff"/>
<rect x="283" y="413" width="3" height="1" fill="#0000ff"/>
<rect x="286" y="413" width="3" height="1" fill="#ffffff"/>
<rect x="289" y="413" width="3" height="1" fill="#000088"/>
<rect x="292" y="413" width="3" height="1" fill="#ddddff"/>
<rect x="295" y="413" width="3" height="1" fill="#ffffff"/>
<rect x="298" y="413" width="3" height="1" fill="#0000ff"/>
<rect x="304" y="412" width="3" height="1" fill="#ffffff"/>
<rect x="307" y="412" width="3" height="1" fill="#6666ff"/>
<rect x="310" y="412" width="3" height="1" fill="#ffffff"/>
<rect x="313" y="412" width="3" height="1" fill="#000066"/>
<rect x="316" y="412" width="3" height="1" fill="#ccccff"/>
<rect x="319" y="412" width="3" height="1" fill="#ffffff"/>
<rect x="322" y="412" width="3" height="1" fill="#3333ff"/>
<rect x="325" y="411" width="3" height="1" fill="#ffffff"/>
<rect x="328" y="411" width="3" height="1" fill="#0000cc"/>
<rect x="331" y="411" width="3" height="1" fill="#aaaaff"/>
<rect x="334" y="410" width="3" height="1" fill="#ffffff"/>
<rect x="337" y="410" width="3" height="1" fill="#0000ff"/>
<rect x="340" y="410" width="3" height="1" fill="#ffffff"/>
<rect x="343" y="410" width="3" height="1" fill="#000088"/>
<rect x="346" y="410" width="3" height="1" fill="#ddddff"/>
<rect x="349" y="410" width="3" height="1" fill="#ffffff"/>
<rect x="352" y="409" width="3" height="1" fill="#0000ff"/>
<rect x="358" y="409" width="3" height="1" fill="#ffffff"/>
<rect x="361" y="409" width="3" height="1" fill="#6666ff"/>
<rect x="364" y="409" width="3" height="1" fill="#ffffff"/>
<rect x="367" y="409" width="3" height="1" fill="#000066"/>
<rect x="370" y="409" width="3" height="1" fill="#ccccff"/>
<rect x="373" y="408" width="3" height="1" fill="#ffffff"/>
<rect x="376" y="408" width="3" height="1" fill="#3333ff"/>
<rect x="379" y="408" width="3" height="1" fill="#ffffff"/>
<rect x="382" y="408" width="3" height="1" fill="#0000cc"/>
<rect x="385" y="408" width="3" height="1" fill="#aaaaff"/>
<rect x="388" y="407" width="3" height="1" fill="#ffffff"/>
<rect x="391" y="407" width="3" height="1" fill="#0000ff"/>
<rect x="394" y="407" width="3" height="1" fill="#ffffff"/>
<rect x="397" y="407" width="3" height="1" fill="#000088"/>
<rect x="400" y="406" width="3" height="1" fill="#ddddff"/>
<rect x="403" y="406" width="3" height="1" fill="#ffffff"/>
<rect x="406" y="406" width="3" height="1" fill="#0000ff"/>
<rect x="412" y="406" width="3" height="1" fill="#ffffff"/>
<rect x="415" y="405" width="3" height="1" fill="#6666ff"/>
<rect x="418" y="405" width="3" height="1" fill="#ffffff"/>
<rect x="421" y="405" width="3" height="1" fill="#000066"/>
<rect x="424" y="405" width="3" height="1" fill="#ccccff"/>
<rect x="427" y="404" width="3" height="1" fill="#ffffff"/>
<rect x="430" y="404" width="3" height="1" fill="#3333ff"/>
<rect x="433" y="404" width="3" height="1" fill="#ffffff"/>
<rect x="436" y="404" width="3" height="1" fill="#0000cc"/>
<rect x="439" y="404" width="3" height="1" fill="#aaaaff"/>
<rect x="442" y="403" width="3" height="1" fill="#ffffff"/>
<rect x="445" y="403" width="3" height="1" fill="#0000ff"/>
<rect x="448" y="403" width="3" height="1" fill="#ffffff"/>
<rect x="451" y="403" width="3" height="1" fill="#000088"/>
<rect x="454" y="402" width="3" height="1" fill="#ddddff"/>
<rect x="457" y="402" width="3" height="1" fill="#ffffff"/>
<rect x="460" y="402" width="3" height="1" fill="#0000ff"/>
<rect x="466" y="402" width="3" height="1" fill="#ffffff"/>
<rect x="469" y="401" width="3" height="1" fill="#6666ff"/>
<rect x="472" y="401" width="3" height="1" fill="#ffffff"/>
<rect x="475" y="401" width="3" height="1" fill="#000066"/>
<rect x="478" y="401" width="3" height="1" fill="#ccccff"/>
<rect x="481" y="401" width="3" height="1" fill="#ffffff"/>
<rect x="484" y="400" width="3" height="1" fill="#3333ff"/>
<rect x="487" y="400" width="3" height="1" fill="#ffffff"/>
<rect x="490" y="400" width="3" height="1" fill="#0000cc"/>
<rect x="493" y="400" width="3" height="1" fill="#aaaaff"/>
<rect x="496" y="400" width="3" height="1" fill="#ffffff"/>
<rect x="499" y="400" width="3" height="1" fill="#0000ff"/>
<rect x="502" y="399" width="3" height="1" fill="#ffffff"/>
<rect x="505" y="399" width="3" height="1" fill="#000088"/>
<rect x="508" y="399" width="3" height="1" fill="#ddddff"/>
<rect x="208" y="282" width="3" height="10" fill="#0000e0"/>
<rect x="211" y="282" width="3" height="10" fill="#0000b0"/>
<rect x="208" y="360" width="3" height="3" fill="#0000ff"/>
<rect x="211" y="360" width="3" height="3" fill="#ffffff"/>
<rect x="214" y="360" width="3" height="3" fill="#0000c0"/>
<rect x="226" y="364" width="3" height="3" fill="#0000c0"/>
<rect x="229" y="364" width="3" height="3" fill="#ffffff"/>
<rect x="232" y="364" width="3" height="3" fill="#0000ff"/>
<rect x="269" y="296" width="3" height="9" fill="#000066"/>
<rect x="272" y="296" width="3" height="9" fill="#ccccff"/>
<rect x="275" y="296" width="3" height="11" fill="#aaaaff"/>
<rect x="278" y="296" width="3" height="9" fill="#000066"/>
<rect x="272" y="305" width="3" height="2" fill="#000066"/>
<rect x="278" y="305" width="3" height="2" fill="#aaaaff"/>
<rect x="281" y="305" width="3" height="2" fill="#000066"/>
<rect x="509" y="322" width="3" height="12" fill="#0000ff"/>
<rect x="512" y="322" width="3" height="12" fill="#ffffff"/>
<rect x="515" y="322" width="3" height="12" fill="#0000ff"/>
<rect x="509" y="392" width="3" height="7" fill="#0000ff"/>
<rect x="512" y="392" width="3" height="7" fill="#ffffff"/>
<rect x="515" y="392" width="3" height="7" fill="#0000ff"/>
<rect x="220" y="423" width="3" height="5" fill="#0000ff"/>
<rect x="223" y="423" width="3" height="5" fill="#ffffff"/>
<rect x="226" y="423" width="3" height="5" fill="#0000ff"/>
<rect x="226" y="422" width="3" height="1" fill="#ffffff"/>
<rect x="238" y="419" width="3" height="3" fill="#000099"/>
<rect x="241" y="417" width="3" height="4" fill="#ffffff"/>
<rect x="244" y="417" width="3" height="3" fill="#ddddff"/>
<rect x="247" y="416" width="3" height="3" fill="#ffffff"/>
<rect x="250" y="416" width="3" height="2" fill="#3333ff"/>
</g>
</g></svg></body></html>
